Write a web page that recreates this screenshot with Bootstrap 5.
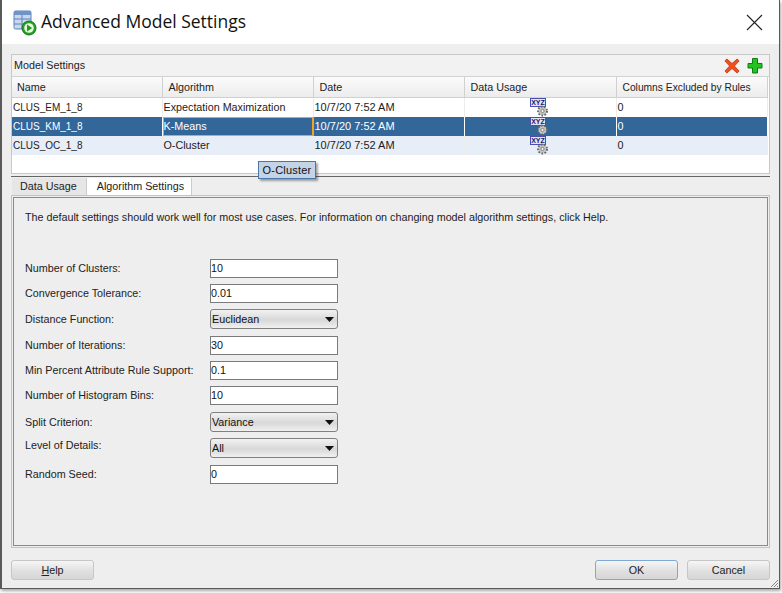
<!DOCTYPE html>
<html lang="en">
<head>
    <meta charset="UTF-8">
    <meta name="viewport" content="width=device-width, initial-scale=1.0">
    <title>Advanced Model Settings</title>
    <link href="https://cdn.jsdelivr.net/npm/bootstrap@5.3.0/dist/css/bootstrap.min.css" rel="stylesheet">
    <style>
        html, body { height: 593px; overflow: hidden; }
        body {
            background: #fff;
            font-family: "Liberation Sans", "DejaVu Sans", sans-serif;
            font-size: 10.750px;
            color: #1c1c1c;
        }
        .dlg-window {
            position: relative;
            width: 780px;
            height: 589px;
            background: #eee;
            border-left: 2px solid #5a5a5a;
            border-right: 1px solid #5a5a5a;
            border-bottom: 1px solid #5a5a5a;
            box-shadow: 1px 2px 3px rgba(0,0,0,.35);
        }
        .dlg-head { height: 44px; background: #fff; padding-left: 11px; }
        .dlg-title {
            font-family: "Open Sans", "Noto Sans", sans-serif;
            font-size: 17.500px;
            margin: 0 0 2px 1px;
            color: #111;
        }
        .dlg-close { margin-left: auto; margin-right: 16px; }
        .dlg-body { padding: 10px 9px 0 9px; }

        /* model table */
        .model-panel { height: 120px; border: 1px solid #c8c8c8; background: #fff; }
        .model-title { height: 22px; background: #f2f2f2; padding: 0 6px 0 2px; border-bottom: 1px solid #d2d2d2; }
        .model-grid { table-layout: fixed; width: 755px; margin: 0; border-collapse: collapse; font-size: 10.750px; }
        .model-grid th {
            height: 20px; padding: 0 0 1px 6px; font-weight: 400; color: #222;
            background: linear-gradient(#fbfbfb, #ececec);
            border: 0; border-right: 1px solid #d0d0d0; border-bottom: 1px solid #d0d0d0;
            white-space: nowrap;
        }
        .model-grid th:first-child { padding-left: 5px; }
        .model-grid th:last-child { font-size: 10.250px; }
        .model-grid td {
            height: 19px; padding: 0 0 0 1px; color: #1c1c1c; background: #fff;
            border: 0; border-right: 1px solid #ececec; border-bottom: 0;
            white-space: nowrap; vertical-align: middle;
        }
        .model-grid td.cell-name { font-size: 10px; }
        .model-grid td.cell-date { font-size: 11px; }
        .model-grid tr.row-sel td { background: #336699; color: #fff; border-right-color: #fff; }
        .model-grid tr.row-alt td { background: #e8eef7; }
        .model-grid tr.row-sel td.cell-focus { box-shadow: inset 0 0 0 1px #f0a326; border-right-color: #f0a326; }
        .usage-cell { text-align: center; line-height: 0; }
        .usage-cell svg { margin-left: -3px; }

        .split-line { border-top: 1px solid #666; height: 2px; margin-top: 2px; }

        /* tabs */
        .tab-strip { height: 17px; border: 0; padding-left: 1px; flex-wrap: nowrap; }
        .tab-strip .nav-link {
            height: 17px; padding: 0 9px 0 8px; line-height: 16px; font-size: 10.750px; color: #222;
            background: #e6e6e6; border: 0; border-radius: 0; white-space: nowrap;
        }
        .tab-strip .nav-link.active { background: #fff; color: #222; width: 106px; padding-left: 10px; border-left: 1px solid #ccc; border-right: 1px solid #ccc; }
        .tab-outer { height: 353px; border: 1px solid #c4c4c4; padding: 1px; }
        .tab-inner { height: 100%; border: 1px solid #8a8a8a; padding: 12px 11px 0 11px; background: #eee; }
        .tab-intro { margin: 0 0 34px 0; line-height: 15px; white-space: nowrap; }

        /* form */
        .fld-row { display: flex; align-items: center; margin-bottom: 6px; height: 19px; }
        .fld-row label { width: 185px; flex: none; white-space: nowrap; color: #222; }
        .fld-row.has-pick { height: 20px; }
        .gap-extra { margin-bottom: 7px; }
        .label-up { margin-bottom: 5px; }
        .fld-input.form-control {
            width: 128px; height: 19px; min-height: 0; padding: 0 0 1px 0; font-size: 10.750px;
            font-family: inherit; color: #111;
            border: 1px solid #7b7b7b; border-radius: 0; background: #fff;
        }
        .fld-pick.form-select {
            width: 128px; height: 20px; padding: 1px 2px 0 1px; font-size: 10.750px; font-family: inherit; color: #111;
            border: 1px solid #808080; border-radius: 3px;
            background-color: #e4e4e4;
            background-image:
                url("data:image/svg+xml,%3csvg xmlns='http://www.w3.org/2000/svg' viewBox='0 0 9 5'%3e%3cpath fill='%23111' d='M0 0h9L4.5 5z'/%3e%3c/svg%3e"),
                linear-gradient(#f2f2f2, #d8d8d8 55%, #f0f0f0);
            background-repeat: no-repeat;
            background-position: right 3px center, 0 0;
            background-size: 9px 5px, 100% 100%;
        }

        /* footer */
        .dlg-foot { padding-top: 12px; }
        .foot-btn.btn {
            width: 83px; height: 20px; padding: 0; font-size: 10.750px; line-height: 18px; color: #222;
            border: 1px solid #c6c6c6; border-radius: 3px;
            background: linear-gradient(#f6f6f6, #e0e0e0 55%, #d6d6d6);
        }
        .foot-btn.btn-default { border-color: #7fa9d3; margin-right: 9px; }

        .hover-tip {
            position: absolute; left: 256px; top: 161px;
            width: 58px; height: 18px; line-height: 16px; text-align: center;
            background: #c3d3e8; border: 1px solid #4b77a8; font-size: 11px; letter-spacing: .2px; color: #111;
            box-shadow: 2px 2px 2px rgba(0,0,0,.35);
        }
        .grip { position: absolute; right: 0; bottom: 0; }
        .tool-gap { gap: 7px; }
    </style>
</head>
<body>
    <div class="dlg-window">
        <div class="dlg-head d-flex align-items-center">
            <svg width="27" height="27" viewBox="0 0 27 27">
                <rect x="1" y="2" width="17" height="18" rx="1.5" fill="#c9d8ee" stroke="#5b82b8"/>
                <rect x="1" y="2" width="17" height="4" fill="#6f94c8"/>
                <path d="M1 10h17M1 15h17M9 6v14" stroke="#5b82b8" fill="none"/>
                <circle cx="16" cy="19" r="7" fill="#22a022" stroke="#157a15"/>
                <circle cx="16" cy="19" r="4.8" fill="#e8f6e0"/>
                <path d="M14 15.6l5.2 3.4-5.2 3.4z" fill="#1f9a1f"/>
            </svg>
            <h1 class="dlg-title">Advanced Model Settings</h1>
            <svg class="dlg-close" width="17" height="17" viewBox="0 0 17 17"><path d="M1 1l15 15M16 1L1 16" stroke="#222" stroke-width="1.1" fill="none"/></svg>
        </div>

        <div class="dlg-body">
            <div class="model-panel">
                <div class="model-title d-flex align-items-center justify-content-between">
                    <span>Model Settings</span>
                    <span class="d-flex align-items-center tool-gap">
                        <svg width="16" height="16" viewBox="0 0 17 17"><path d="M3 1l5.5 4.8L14 1l2 2.2-5 5.3 5 5.3-2 2.2-5.5-4.8L3 16 1 13.800l5-5.300-5-5.300z" fill="#f0501c" stroke="#b92c08" stroke-width=".8"/></svg>
                        <svg width="16" height="17" viewBox="0 0 16 17"><path d="M5.500 1.500h5v5h4.500v4.500h-4.500v5h-5v-5H1V6.500h4.500z" fill="#22c322" stroke="#0f7d0f"/></svg>
                    </span>
                </div>
                <table class="table model-grid">
                    <colgroup><col style="width:150px"><col style="width:151px"><col style="width:151px"><col style="width:152px"><col style="width:151px"></colgroup>
                    <thead>
                        <tr><th>Name</th><th>Algorithm</th><th>Date</th><th>Data Usage</th><th>Columns Excluded by Rules</th></tr>
                    </thead>
                    <tbody id="modelRows"></tbody>
                </table>
            </div>
            <div class="split-line"></div>

            <ul class="nav nav-tabs tab-strip">
                <li class="nav-item"><a class="nav-link" href="#">Data Usage</a></li>
                <li class="nav-item"><a class="nav-link active" href="#">Algorithm Settings</a></li>
            </ul>
            <div class="tab-outer">
                <div class="tab-inner">
                    <p class="tab-intro">The default settings should work well for most use cases. For information on changing model algorithm settings, click Help.</p>
                    <form id="algoForm"></form>
                </div>
            </div>

            <div class="dlg-foot d-flex justify-content-between">
                <button class="btn foot-btn"><u>H</u>elp</button>
                <div class="d-flex">
                    <button class="btn foot-btn btn-default">OK</button>
                    <button class="btn foot-btn">Cancel</button>
                </div>
            </div>
        </div>

        <div class="hover-tip">O-Cluster</div>
        <svg class="grip" width="10" height="10" viewBox="0 0 10 10"><path d="M9 2L2 9M9 5L5 9M9 8L8 9" stroke="#888" fill="none"/></svg>
    </div>

    <script>
        // Table rows
        const models = [
            { name: 'CLUS_EM_1_8', algo: 'Expectation Maximization', cls: '' },
            { name: 'CLUS_KM_1_8', algo: 'K-Means', cls: 'row-sel' },
            { name: 'CLUS_OC_1_8', algo: 'O-Cluster', cls: 'row-alt' }
        ];
        const usageIcon = `<svg width="19" height="19" viewBox="0 0 19 19">
            <rect x="0.500" y="0.500" width="15" height="8" fill="#dfe4fb" stroke="#4a4fb0"/>
            <text x="8" y="7" text-anchor="middle" font-family="Liberation Sans, sans-serif" font-size="7" font-weight="700" fill="#20206a">XYZ</text>
            <circle cx="12.500" cy="13" r="4.400" fill="#bdbdbd" stroke="#666" stroke-width="2.200" stroke-dasharray="1.600 1.500"/>
            <circle cx="12.500" cy="13" r="3.600" fill="#c4c4c4"/>
            <circle cx="12.500" cy="13" r="1.600" fill="#f2f2f2" stroke="#666" stroke-width=".7"/>
        </svg>`;
        document.getElementById('modelRows').innerHTML = models.map(m => `
            <tr class="${m.cls}">
                <td class="cell-name">${m.name}</td>
                <td class="${m.cls === 'row-sel' ? 'cell-focus' : ''}">${m.algo}</td>
                <td class="cell-date">10/7/20 7:52 AM</td>
                <td class="usage-cell">${usageIcon}</td>
                <td>0</td>
            </tr>`).join('');

        // Algorithm settings
        const fields = [
            { label: 'Number of Clusters:', value: '10' },
            { label: 'Convergence Tolerance:', value: '0.01' },
            { label: 'Distance Function:', pick: 'Euclidean', extra: true },
            { label: 'Number of Iterations:', value: '30' },
            { label: 'Min Percent Attribute Rule Support:', value: '0.1' },
            { label: 'Number of Histogram Bins:', value: '10', extra: true },
            { label: 'Split Criterion:', pick: 'Variance' },
            { label: 'Level of Details:', pick: 'All', extra: true, up: true },
            { label: 'Random Seed:', value: '0' }
        ];
        document.getElementById('algoForm').innerHTML = fields.map(f => `
            <div class="fld-row ${f.pick ? 'has-pick' : ''} ${f.extra ? 'gap-extra' : ''}">
                <label class="${f.up ? 'label-up' : ''}">${f.label}</label>
                ${f.pick
                    ? `<select class="form-select fld-pick"><option>${f.pick}</option></select>`
                    : `<input class="form-control fld-input" value="${f.value}">`}
            </div>`).join('');
    </script>
    <script src="https://cdn.jsdelivr.net/npm/bootstrap@5.3.0/dist/js/bootstrap.bundle.min.js"></script>
</body>
</html>
